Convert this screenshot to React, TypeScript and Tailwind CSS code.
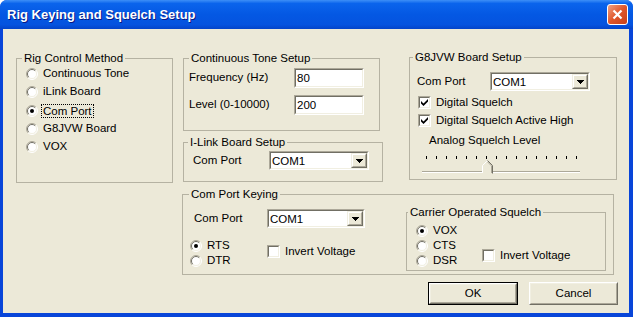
import React from "react";

const FONT = "font-['Liberation_Sans',Arial,sans-serif]";

function Radio({ label, checked, focus, h }: { label: string; checked?: boolean; focus?: boolean; h: string }) {
  return (
    <div className={`flex items-center ${h}`}>
      <svg width="12" height="12" viewBox="0 0 12 12" className="shrink-0">
        <circle cx="6" cy="6" r="5" fill="#fff" />
        <path d="M2.1 9.9A5.5 5.5 0 0 1 9.9 2.1" fill="none" stroke="#aca899" />
        <path d="M9.9 2.1A5.5 5.5 0 0 1 2.1 9.9" fill="none" stroke="#fff" />
        <path d="M2.8 9.2A4.5 4.5 0 0 1 9.2 2.8" fill="none" stroke="#716f64" />
        <path d="M9.2 2.8A4.5 4.5 0 0 1 2.8 9.2" fill="none" stroke="#f1efe2" />
        {checked && <circle cx="6" cy="6" r="2" fill="#000" />}
      </svg>
      {focus ? (
        <span className="ml-[3px] px-[1px] border border-dotted border-black leading-[12px]">{label}</span>
      ) : (
        <span className="ml-[5px] leading-none">{label}</span>
      )}
    </div>
  );
}

function Check({ label, checked }: { label: string; checked?: boolean }) {
  return (
    <div className="flex items-center h-[13px]">
      <div className="w-[13px] h-[13px] shrink-0 border border-t-[#aca899] border-l-[#aca899] border-b-white border-r-white">
        <div className="w-full h-full border border-t-[#716f64] border-l-[#716f64] border-b-[#f1efe2] border-r-[#f1efe2] bg-white flex items-center justify-center">
          {checked && (
            <svg width="7" height="7" viewBox="0 0 7 7">
              <path d="M0 2L2.5 4.5L7 0V2.5L2.5 7L0 4.5Z" fill="#000" />
            </svg>
          )}
        </div>
      </div>
      <span className="ml-[5px] leading-none">{label}</span>
    </div>
  );
}

function Edit({ value }: { value: string }) {
  return (
    <div className="w-[70px] h-[20px] border border-t-[#aca899] border-l-[#aca899] border-b-white border-r-white">
      <div className="h-full border border-t-[#716f64] border-l-[#716f64] border-b-[#f1efe2] border-r-[#f1efe2] bg-white pl-[1px] pt-[1px] leading-[14px]">
        {value}
      </div>
    </div>
  );
}

function Combo({ w }: { w: string }) {
  return (
    <div className={`${w} h-[19px] border border-t-[#aca899] border-l-[#aca899] border-b-white border-r-white`}>
      <div className="h-full flex border border-t-[#716f64] border-l-[#716f64] border-b-[#f1efe2] border-r-[#f1efe2] bg-white">
        <span className="flex-1 pl-[1px] pt-[1px] leading-[14px]">COM1</span>
        <div className="w-[16px] h-full border border-t-[#f1efe2] border-l-[#f1efe2] border-b-[#716f64] border-r-[#716f64]">
          <div className="h-full border border-t-white border-l-white border-b-[#aca899] border-r-[#aca899] bg-[#ece9d8] flex items-center justify-center">
            <svg width="7" height="4" viewBox="0 0 7 4">
              <path d="M0 0H7V1H6V2H5V3H4V4H3V3H2V2H1V1H0Z" fill="#000" />
            </svg>
          </div>
        </div>
      </div>
    </div>
  );
}

function Group({ title, cls, lg, children }: { title: string; cls: string; lg: string; children: React.ReactNode }) {
  return (
    <fieldset className={`border border-[#b5b2a2] ${cls}`}>
      <legend className={`px-[2px] leading-[14px] ${lg}`}>{title}</legend>
      {children}
    </fieldset>
  );
}

function Btn({ label, w, def }: { label: string; w: string; def?: boolean }) {
  return (
    <div className={`${w} h-[23px] ${def ? "border border-black" : ""}`}>
      <div className="h-full border border-t-white border-l-white border-b-[#716f64] border-r-[#716f64]">
        <div className="h-full border border-t-[#f1efe2] border-l-[#f1efe2] border-b-[#aca899] border-r-[#aca899] flex items-center justify-center leading-none">
          {label}
        </div>
      </div>
    </div>
  );
}

export default function App() {
  return (
    <div className={`w-[633px] h-[317px] bg-white ${FONT}`}>
      <div className="w-full h-full flex flex-col bg-[#0845d9] rounded-t-[7px] overflow-hidden">
        {/* title bar */}
        <div className="h-[29px] shrink-0 flex items-center pl-[7px] pr-[5px] bg-[linear-gradient(to_bottom,#3d8ff7_0%,#0a64ec_12%,#0458e3_50%,#0553df_85%,#0444c9_100%)]">
          <span className="flex-1 text-white font-bold text-[13px] [text-shadow:1px_1px_0_#0a1883]">
            Rig Keying and Squelch Setup
          </span>
          <div className="w-[21px] h-[21px] rounded-[3px] border border-white bg-[linear-gradient(to_bottom_right,#f0a183,#e0562a_50%,#c84018)] flex items-center justify-center">
            <svg width="11" height="11" viewBox="0 0 11 11">
              <path d="M1.5 1.5L9.5 9.5M9.5 1.5L1.5 9.5" stroke="#fff" strokeWidth="2.2" />
            </svg>
          </div>
        </div>

        {/* client area */}
        <div className="flex-1 ml-[3px] mr-[4px] mb-[4px] bg-[#ece9d8] text-black text-[11.5px] flex flex-col">
          <div className="flex items-start">
            <Group title="Rig Control Method" cls="ml-[13px] mt-[22px] w-[157px] h-[132px]" lg="ml-[5px]">
              <div className="pl-[9px]">
                <Radio h="h-[18px]" label="Continuous Tone" />
                <Radio h="h-[18px]" label="iLink Board" />
                <Radio h="h-[19px]" label="Com Port" checked focus />
                <Radio h="h-[18px]" label="G8JVW Board" />
                <Radio h="h-[18px]" label="VOX" />
              </div>
            </Group>

            <div className="ml-[10px] mt-[22px] flex flex-col">
              <Group title="Continuous Tone Setup" cls="w-[197px] h-[80px]" lg="ml-[5px]">
                <div className="pl-[5px] pt-[3px]">
                  <div className="flex items-center">
                    <span className="w-[105px]">Frequency (Hz)</span>
                    <Edit value="80" />
                  </div>
                  <div className="flex items-center mt-[7px]">
                    <span className="w-[105px]">Level (0-10000)</span>
                    <Edit value="200" />
                  </div>
                </div>
              </Group>
              <Group title="I-Link Board Setup" cls="mt-[4px] w-[200px] h-[47px]" lg="ml-[4px]">
                <div className="pl-[9px] pt-[2px] flex items-center">
                  <span className="w-[76px]">Com Port</span>
                  <Combo w="w-[100px]" />
                </div>
              </Group>
            </div>

            <Group title="G8JVW Board Setup" cls="ml-[26px] mt-[21px] w-[208px] h-[130px]" lg="ml-[3px]">
              <div className="pl-[7px]">
                <div className="mt-[8px] flex items-center">
                  <span className="w-[73px]">Com Port</span>
                  <Combo w="w-[100px]" />
                </div>
                <div className="mt-[5px] ml-[1px]">
                  <Check checked label="Digital Squelch" />
                </div>
                <div className="mt-[5px] ml-[1px]">
                  <Check checked label="Digital Squelch Active High" />
                </div>
                <div className="mt-[6px] ml-[12px] leading-[14px]">Analog Squelch Level</div>
                <div className="ml-[9px] mt-[9px] w-[151px] h-[3px] flex justify-between">
                  {Array.from({ length: 16 }).map((_, i) => (
                    <div key={i} className="w-px h-full bg-black" />
                  ))}
                </div>
                <div className="relative ml-[5px] mt-[12px] w-[158px] h-[2px] border-t border-t-[#aca899] border-b border-b-white">
                  <svg width="11" height="14" viewBox="0 0 11 14" className="absolute left-[60px] -top-[12px]">
                    <path d="M0.5 13V5.5L5.5 0.5L10.5 5.5V13.5H0Z" fill="#ece9d8" />
                    <path d="M0.5 13V5.5L5.5 0.5" fill="none" stroke="#fff" />
                    <path d="M5.5 0.5L10.5 5.5V13.5" fill="none" stroke="#716f64" />
                    <path d="M5.5 1.9L9.5 5.9V13" fill="none" stroke="#aca899" />
                  </svg>
                </div>
              </div>
            </Group>
          </div>

          <Group title="Com Port Keying" cls="ml-[179px] mt-[4px] w-[432px] h-[88px]" lg="ml-[6px]">
            <div className="flex">
              <div className="w-[223px] pl-[7px]">
                <div className="mt-[8px] ml-[4px] flex items-center">
                  <span className="w-[73px]">Com Port</span>
                  <Combo w="w-[98px]" />
                </div>
                <div className="mt-[10px] flex">
                  <div className="w-[77px]">
                    <Radio h="h-[15px]" label="RTS" checked />
                    <Radio h="h-[15px]" label="DTR" />
                  </div>
                  <div className="mt-[7px]">
                    <Check label="Invert Voltage" />
                  </div>
                </div>
              </div>
              <Group title="Carrier Operated Squelch" cls="mt-[4px] w-[200px] h-[66px]" lg="ml-[1px]">
                <div className="pl-[9px] pt-[4px] flex">
                  <div className="w-[66px]">
                    <Radio h="h-[15px]" label="VOX" checked />
                    <Radio h="h-[15px]" label="CTS" />
                    <Radio h="h-[15px]" label="DSR" />
                  </div>
                  <div className="mt-[26px]">
                    <Check label="Invert Voltage" />
                  </div>
                </div>
              </Group>
            </div>
          </Group>

          <div className="mt-[7px] flex justify-end gap-[11px] pr-[11px]">
            <Btn label="OK" w="w-[90px]" def />
            <Btn label="Cancel" w="w-[89px]" />
          </div>
        </div>
      </div>
    </div>
  );
}
